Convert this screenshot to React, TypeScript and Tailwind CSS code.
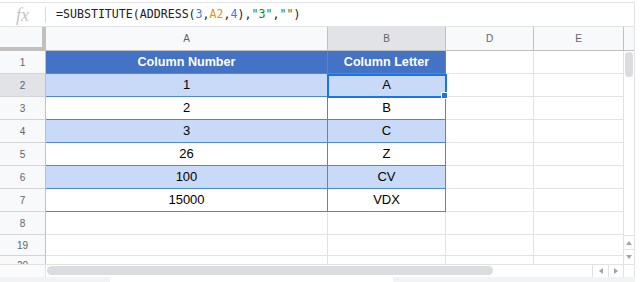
import React from "react";

type Row = { n: string; a: string; b: string; head?: boolean; tint?: boolean };

const rows: Row[] = [
  { n: "1", a: "Column Number", b: "Column Letter", head: true },
  { n: "2", a: "1", b: "A", tint: true },
  { n: "3", a: "2", b: "B" },
  { n: "4", a: "3", b: "C", tint: true },
  { n: "5", a: "26", b: "Z" },
  { n: "6", a: "100", b: "CV", tint: true },
  { n: "7", a: "15000", b: "VDX" },
];

function FormulaBar() {
  return (
    <div className="h-[27px] pt-[2px]">
      <div className="flex h-[25px] w-[635px] items-center border-t border-r border-b border-[#e1e3e6]">
        <div className="flex w-[45px] items-center justify-center font-['Liberation_Serif',serif] text-[18px] italic leading-none text-[#c2c4c7]">
          fx
        </div>
        <div className="h-[16px] w-px bg-[#dadce0]" />
        <div className="ml-[10px] font-['DejaVu_Sans_Mono',monospace] text-[11.6px] text-[#202124]">
          =SUBSTITUTE(ADDRESS(<span className="text-[#3b7ddd]">3</span>,
          <span className="text-[#f09300]">A2</span>,<span className="text-[#3b7ddd]">4</span>),
          <span className="text-[#188038]">"3"</span>,<span className="text-[#188038]">""</span>)
        </div>
      </div>
    </div>
  );
}

function RowHead({ n, active, h = "h-[23px]" }: { n: string; active?: boolean; h?: string }) {
  return (
    <div
      className={`flex w-[46px] shrink-0 items-center justify-center border-r border-b border-r-[#c0c0c0] border-b-[#d4d4d4] text-[10px] text-[#5f6368] ${h} ${
        active ? "bg-[#e1e3e6]" : "bg-[#f8f9fa]"
      }`}
    >
      {n}
    </div>
  );
}

function Blank({ w, h = "h-[23px]" }: { w: string; h?: string }) {
  return <div className={`${w} ${h} shrink-0 border-r border-b border-[#e2e2e2]`} />;
}

function DataRow({ r }: { r: Row }) {
  const fill = r.head
    ? "bg-[#4472c4] text-white font-bold text-[12.6px]"
    : r.tint
      ? "bg-[#c9daf8] text-black text-[13px]"
      : "bg-white text-black text-[13px]";
  return (
    <div className="flex h-[23px]">
      <RowHead n={r.n} active={r.n === "2"} />
      <div className={`flex w-[282px] items-center justify-center border-r border-b border-[#4a86e8] ${fill}`}>
        {r.a}
      </div>
      <div className={`flex w-[118px] items-center justify-center border-r border-b border-[#4a86e8] ${fill}`}>
        {r.b}
      </div>
      <Blank w="w-[88px]" />
      <Blank w="w-[90px]" />
    </div>
  );
}

function Grid() {
  const colHead = "flex h-[24px] items-center justify-center border-r border-b border-[#c0c0c0] text-[10px] text-[#5f6368]";
  return (
    <div className="flex">
      <div className="w-[624px]">
        <div className="flex">
          <div className="h-[24px] w-[46px] border-r-4 border-b-4 border-[#c0c0c0] bg-[#f8f9fa]" />
          <div className={`${colHead} w-[282px] bg-[#f8f9fa]`}>A</div>
          <div className={`${colHead} w-[118px] bg-[#e1e3e6]`}>B</div>
          <div className={`${colHead} w-[88px] bg-[#f8f9fa]`}>D</div>
          <div className={`${colHead} w-[90px] bg-[#f8f9fa]`}>E</div>
        </div>
        {rows.map((r) => (
          <DataRow key={r.n} r={r} />
        ))}
        <div className="flex">
          <RowHead n="8" />
          <Blank w="w-[282px]" />
          <Blank w="w-[118px]" />
          <Blank w="w-[88px]" />
          <Blank w="w-[90px]" />
        </div>
        <div className="flex">
          <RowHead n="19" h="h-[21px]" />
          <Blank w="w-[282px]" h="h-[21px]" />
          <Blank w="w-[118px]" h="h-[21px]" />
          <Blank w="w-[88px]" h="h-[21px]" />
          <Blank w="w-[90px]" h="h-[21px]" />
        </div>
        <div className="flex h-[8px] overflow-hidden">
          <div className="w-[46px] shrink-0 border-r border-[#c0c0c0] bg-[#f8f9fa]">
            <div className="flex h-[18px] items-center justify-center text-[10px] text-[#5f6368]">20</div>
          </div>
          <div className="w-[282px] shrink-0 border-r border-[#e2e2e2]" />
          <div className="w-[118px] shrink-0 border-r border-[#e2e2e2]" />
          <div className="w-[88px] shrink-0 border-r border-[#e2e2e2]" />
          <div className="w-[90px] shrink-0 border-r border-[#e2e2e2]" />
        </div>
      </div>
      <div className="flex w-[11px] flex-col border-r border-[#e2e2e2]">
        <div className="h-[24px] border-b border-[#c0c0c0] bg-[#f8f9fa]" />
        <div className="flex-1">
          <div className="mt-[1px] ml-[1px] h-[25px] w-[8px] rounded-full bg-[#dadce0]" />
        </div>
        <div className="flex h-[14px] items-center justify-center border-t border-[#e2e2e2]">
          <svg width="6" height="4" viewBox="0 0 6 4">
            <path d="M0 4 L3 0 L6 4 Z" fill="#a0a4a8" />
          </svg>
        </div>
        <div className="flex h-[15px] items-center justify-center border-t border-[#e2e2e2]">
          <svg width="6" height="4" viewBox="0 0 6 4">
            <path d="M0 0 L3 4 L6 0 Z" fill="#a0a4a8" />
          </svg>
        </div>
      </div>
    </div>
  );
}

function HScroll() {
  return (
    <div className="flex h-[13px] w-[635px] border-t border-[#e2e2e2]">
      <div className="w-[46px] border-r border-[#e2e2e2] bg-[#fbfbfb]" />
      <div className="w-[546px]">
        <div className="mt-[1px] ml-[1px] h-[9px] w-[446px] rounded-full bg-[#dadce0]" />
      </div>
      <div className="flex w-[16px] items-center justify-center border-l border-[#e2e2e2]">
        <svg width="4" height="6" viewBox="0 0 4 6">
          <path d="M4 0 L0 3 L4 6 Z" fill="#a0a4a8" />
        </svg>
      </div>
      <div className="flex w-[16px] items-center justify-center border-l border-r border-[#e2e2e2]">
        <svg width="4" height="6" viewBox="0 0 4 6">
          <path d="M0 0 L4 3 L0 6 Z" fill="#a0a4a8" />
        </svg>
      </div>
      <div className="w-[11px] border-r border-[#e2e2e2]" />
    </div>
  );
}

export default function App() {
  return (
    <div className="relative h-[282px] w-[641px] overflow-hidden bg-white font-['Liberation_Sans',Arial,sans-serif]">
      <FormulaBar />
      <Grid />
      <HScroll />
      <div className="flex h-[5px]">
        <div className="w-[110px] bg-[#f1f3f4]" />
        <div className="w-[283px]" />
        <div className="w-[242px] bg-[#f1f3f4]" />
      </div>
      {/* active cell B2 */}
      <div className="absolute top-[74px] left-[327px] h-[24px] w-[120px] border-2 border-[#1a73e8]" />
      <div className="absolute top-[92px] left-[441px] h-[7px] w-[7px] border border-white bg-[#1a73e8]" />
    </div>
  );
}
